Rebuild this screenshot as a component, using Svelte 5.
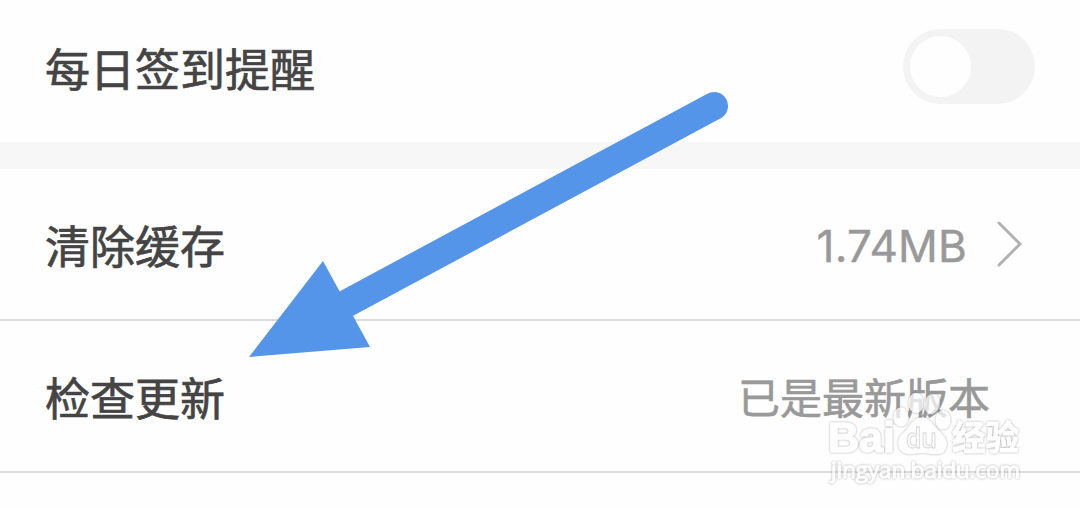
<script lang="ts">
    let reminder = $state(false);
</script>

<!--
========================================================================================================================
    //region HTML
========================================================================================================================
-->

<main class="settings">
    <section class="group">
        <div class="row first">
            <span class="label">每日签到提醒</span>
            <button
                class="switch"
                class:on={reminder}
                role="switch"
                aria-checked={reminder}
                aria-label="每日签到提醒"
                onclick={() => (reminder = !reminder)}
            ><span class="knob"></span></button>
        </div>
    </section>

    <section class="group">
        <div class="row">
            <span class="label">清除缓存</span>
            <span class="size">1.74MB</span>
            <svg class="chevron" width="28" height="50" viewBox="0 0 28 50">
                <path d="M4 4 L25 25 L4 46" />
            </svg>
        </div>
        <div class="row">
            <span class="label">检查更新</span>
            <span class="version">已是最新版本</span>
        </div>
    </section>

    <!-- Pointer and watermark lie over the rows -->
    <svg class="overlay" width="1080" height="508" viewBox="0 0 1080 508">
        <path class="shaft" d="M714 106 L340 307" />
        <path class="head" d="M249 357 L323 261 L370 347 Z" />

        <g class="mark">
            <text class="brand" x="828" y="452" textLength="67" lengthAdjust="spacingAndGlyphs">Bai</text>
            <ellipse cx="901" cy="417" rx="7" ry="9" />
            <ellipse cx="916" cy="403" rx="7" ry="9.5" />
            <ellipse cx="932" cy="404" rx="7" ry="9.5" transform="rotate(12 932 404)" />
            <ellipse cx="943" cy="420" rx="7" ry="9" />
            <path d="M922 418 C929 418 932 424 937 430 C943 436 947 439 946 446 C944 456 934 454 922 452 C911 454 900 456 899 444 C898 438 903 434 907 430 C912 424 914 418 922 418 Z" />
            <text class="du" x="906" y="448" textLength="31" lengthAdjust="spacingAndGlyphs">du</text>
            <text class="cn" x="952" y="450" textLength="67" lengthAdjust="spacingAndGlyphs">经验</text>
            <text class="site" x="831" y="478" textLength="189" lengthAdjust="spacingAndGlyphs">jingyan.baidu.com</text>
        </g>
    </svg>
</main>

<!--
========================================================================================================================
    //region CSS
========================================================================================================================
-->

<style>
    :global(body) { margin: 0; background: #fefefe; }

    .settings {
        position: relative;
        height: 508px;
        overflow: hidden;
        background: #fefefe;
        font-family: Inter, 'Noto Sans CJK SC', sans-serif;
    }

    .group + .group { border-top: 27px solid #f7f7f7; }

    .row {
        box-sizing: border-box;
        height: 152px;
        padding: 0 45px;
        display: flex;
        align-items: center;
        border-bottom: 2px solid #dcdcdc;
    }

    .row.first {
        height: 142px;
        padding-bottom: 9px;
        border-bottom: none;
    }

    .label {
        flex: 1;
        padding-top: 2px;
        color: #444;
        font-family: 'Noto Sans CJK SC', sans-serif;
        font-size: 45px;
        line-height: 60px;
        -webkit-text-stroke: 0.7px #444;
    }

    .switch {
        width: 132px;
        height: 75px;
        padding: 0 7px;
        display: flex;
        align-items: center;
        border: none;
        border-radius: 38px;
        background: #f3f3f3;
        cursor: pointer;
    }

    .knob {
        width: 61px;
        height: 61px;
        border-radius: 50%;
        background: #fefefe;
    }

    .switch.on { background: #5495ea; justify-content: flex-end; }

    .size {
        padding-top: 4px;
        color: #999;
        font-size: 44px;
        line-height: 60px;
        letter-spacing: 0.2px;
        -webkit-text-stroke: 0.4px #999;
    }

    .chevron {
        margin: 0 12px 0 28px;
        fill: none;
        stroke: #b2b2b2;
        stroke-width: 3;
        stroke-linecap: round;
    }

    .version {
        margin-right: 45px;
        color: #999;
        font-family: 'Noto Sans CJK SC', sans-serif;
        font-size: 42px;
        line-height: 60px;
        -webkit-text-stroke: 0.6px #999;
    }

    .overlay {
        position: absolute;
        inset: 0;
        pointer-events: none;
    }

    .shaft {
        fill: none;
        stroke: #5495ea;
        stroke-width: 28;
        stroke-linecap: round;
    }

    .head { fill: #5495ea; }

    .mark {
        fill: #fff;
        stroke: #fff;
        stroke-width: 1.5;
        stroke-linejoin: round;
        opacity: 0.72;
        font-family: 'Open Sans', sans-serif;
    }

    .mark > * { filter: drop-shadow(0 0 0.8px rgba(0, 0, 0, 0.45)); }

    .brand { font-family: 'Liberation Sans', sans-serif; font-size: 43px; font-weight: 700; }
    .mark > .du { font-size: 27px; font-weight: 600; stroke: #d4d4d4; stroke-width: 1.3; filter: none; }
    .cn { font-family: 'Noto Sans CJK SC', sans-serif; font-size: 34px; font-weight: 700; stroke-width: 1; }
    .site { font-size: 22px; font-weight: 400; stroke-width: 1.3; }
</style>
